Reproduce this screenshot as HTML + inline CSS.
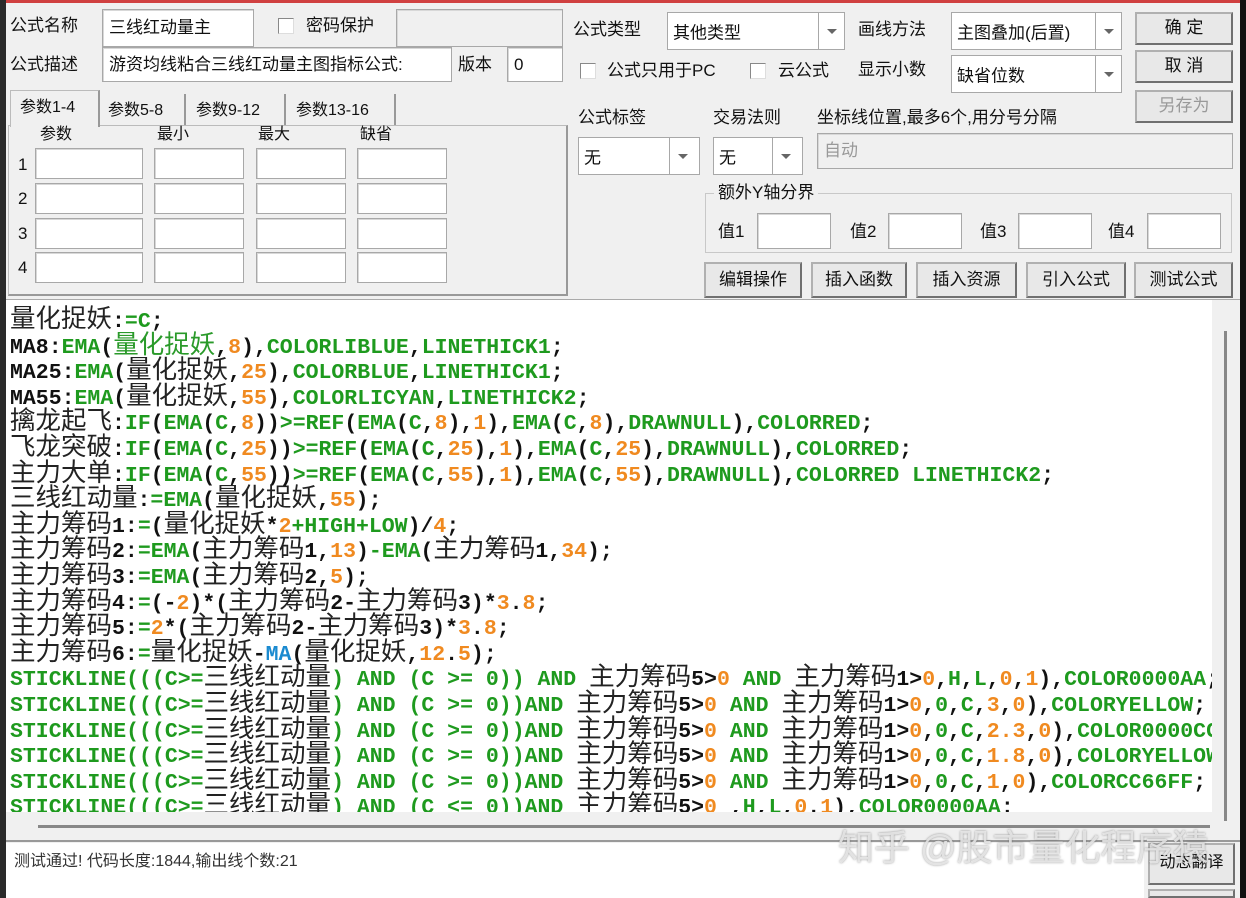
<!DOCTYPE html>
<html><head><meta charset="utf-8"><style>
*{box-sizing:border-box;margin:0;padding:0}
html,body{width:1246px;height:898px;overflow:hidden}
body{background:#f0f0f0;position:relative;font-family:"Liberation Sans","Noto Sans CJK SC",sans-serif;font-size:17px;color:#111}
.a{position:absolute}
.l{position:absolute;white-space:nowrap;line-height:20px}
.in{position:absolute;background:#fff;border:1px solid #a8a8a8;box-shadow:inset 1px 1px 0 #d8d8d8}
.gr{background:#f0f0f0}
.cb{position:absolute;width:16px;height:16px;background:#fff;border:1px solid #888;border-right-color:#ddd;border-bottom-color:#ddd}
.btn{position:absolute;background:#e8e8e8;border:2px solid #707070;border-top-color:#b0b0b0;border-left-color:#b0b0b0;text-align:center;font-size:17px}
.cmb{position:absolute;background:#fff;border:1px solid #a8a8a8}
.cmb .ar{position:absolute;right:0;top:0;bottom:0;width:26px;border-left:1px solid #a8a8a8}
.cmb .ar:after{content:"";position:absolute;left:8px;top:50%;margin-top:-2px;border:5px solid transparent;border-top:5px solid #666}
.cmb span{position:absolute;left:5px;top:50%;transform:translateY(-50%);white-space:nowrap}
#code{position:absolute;left:6px;top:300px;width:1206px;height:512px;background:#fff;overflow:hidden;padding:4px 0 0 4px}
.ln{height:25.6px;line-height:25.6px;white-space:nowrap;font-family:"Liberation Mono",monospace;font-weight:bold;font-size:21.5px;color:#111}
g{color:#1e9a1e}o{color:#f08a20}bl{color:#1a8ad0}
i{font-style:normal;font-weight:normal;font-family:"Noto Sans CJK SC",sans-serif;font-size:25.5px;color:#222;letter-spacing:0}
i.gg{color:#2a9a2a}
</style></head><body>
<div class="a" style="left:0;top:0;width:1246px;height:3px;background:#d04040"></div>
<div class="a" style="left:0;top:0;width:6px;height:898px;background:#2a2a2a"></div>
<div class="a" style="left:1240px;top:0;width:6px;height:898px;background:#111"></div>

<div class="l" style="left:10px;top:16px">公式名称</div>
<div class="in" style="left:102px;top:9px;width:152px;height:38px"><span class="l" style="left:6px;top:8px">三线红动量主</span></div>
<div class="cb" style="left:278px;top:18px"></div>
<div class="l" style="left:306px;top:16px">密码保护</div>
<div class="in gr" style="left:396px;top:9px;width:167px;height:38px"></div>
<div class="l" style="left:10px;top:55px">公式描述</div>
<div class="in" style="left:102px;top:47px;width:350px;height:35px"><span class="l" style="left:6px;top:7px">游资均线粘合三线红动量主图指标公式:</span></div>
<div class="l" style="left:458px;top:55px">版本</div>
<div class="in" style="left:507px;top:47px;width:56px;height:35px"><span class="l" style="left:6px;top:7px">0</span></div>

<div class="a" style="left:8px;top:125px;width:560px;height:171px;border:1px solid #bbb;border-right:2px solid #999;border-bottom:2px solid #999"></div>
<div class="a" style="left:10px;top:90px;width:90px;height:37px;background:#f0f0f0;border:1px solid #bbb;border-bottom:none;border-right:2px solid #999"></div>
<div class="l" style="left:20px;top:98px;font-size:16px">参数1-4</div>
<div class="a" style="left:102px;top:94px;width:84px;height:31px;border-right:2px solid #999"></div>
<div class="l" style="left:108px;top:101px;font-size:16px">参数5-8</div>
<div class="a" style="left:188px;top:94px;width:98px;height:31px;border-right:2px solid #999"></div>
<div class="l" style="left:196px;top:101px;font-size:16px">参数9-12</div>
<div class="a" style="left:288px;top:94px;width:108px;height:31px;border-right:2px solid #999"></div>
<div class="l" style="left:296px;top:101px;font-size:16px">参数13-16</div>
<div class="l" style="left:40px;top:125px;font-size:16px">参数</div>
<div class="l" style="left:157px;top:125px;font-size:16px">最小</div>
<div class="l" style="left:258px;top:125px;font-size:16px">最大</div>
<div class="l" style="left:360px;top:125px;font-size:16px">缺省</div>
<div class="l" style="left:18px;top:155px">1</div><div class="l" style="left:18px;top:189px">2</div><div class="l" style="left:18px;top:224px">3</div><div class="l" style="left:18px;top:258px">4</div>
<div class="in" style="left:35px;top:148px;width:108px;height:31px"></div><div class="in" style="left:154px;top:148px;width:90px;height:31px"></div><div class="in" style="left:256px;top:148px;width:90px;height:31px"></div><div class="in" style="left:357px;top:148px;width:90px;height:31px"></div>
<div class="in" style="left:35px;top:183px;width:108px;height:31px"></div><div class="in" style="left:154px;top:183px;width:90px;height:31px"></div><div class="in" style="left:256px;top:183px;width:90px;height:31px"></div><div class="in" style="left:357px;top:183px;width:90px;height:31px"></div>
<div class="in" style="left:35px;top:218px;width:108px;height:31px"></div><div class="in" style="left:154px;top:218px;width:90px;height:31px"></div><div class="in" style="left:256px;top:218px;width:90px;height:31px"></div><div class="in" style="left:357px;top:218px;width:90px;height:31px"></div>
<div class="in" style="left:35px;top:252px;width:108px;height:31px"></div><div class="in" style="left:154px;top:252px;width:90px;height:31px"></div><div class="in" style="left:256px;top:252px;width:90px;height:31px"></div><div class="in" style="left:357px;top:252px;width:90px;height:31px"></div>

<div class="l" style="left:573px;top:20px">公式类型</div>
<div class="cmb" style="left:667px;top:12px;width:178px;height:38px"><span>其他类型</span><div class="ar"></div></div>
<div class="l" style="left:858px;top:20px">画线方法</div>
<div class="cmb" style="left:951px;top:12px;width:171px;height:38px"><span>主图叠加(后置)</span><div class="ar"></div></div>
<div class="btn" style="left:1135px;top:12px;width:98px;height:33px;line-height:28px">确 定</div>
<div class="cb" style="left:580px;top:63px"></div>
<div class="l" style="left:607px;top:61px">公式只用于PC</div>
<div class="cb" style="left:750px;top:63px"></div>
<div class="l" style="left:778px;top:61px">云公式</div>
<div class="l" style="left:858px;top:60px">显示小数</div>
<div class="cmb" style="left:951px;top:55px;width:171px;height:38px"><span>缺省位数</span><div class="ar"></div></div>
<div class="btn" style="left:1135px;top:50px;width:98px;height:33px;line-height:28px">取 消</div>
<div class="btn" style="left:1135px;top:90px;width:98px;height:33px;line-height:28px;color:#999">另存为</div>
<div class="l" style="left:578px;top:108px">公式标签</div>
<div class="l" style="left:713px;top:108px">交易法则</div>
<div class="l" style="left:817px;top:108px">坐标线位置,最多6个,用分号分隔</div>
<div class="cmb" style="left:578px;top:137px;width:122px;height:38px"><span>无</span><div class="ar" style="width:30px"></div></div>
<div class="cmb" style="left:713px;top:137px;width:90px;height:38px"><span>无</span><div class="ar" style="width:30px"></div></div>
<div class="in gr" style="left:817px;top:133px;width:416px;height:36px"><span class="l" style="left:6px;top:7px;color:#999">自动</span></div>
<div class="a" style="left:705px;top:193px;width:527px;height:60px;border:1px solid #c8c8c8"></div>
<div class="l" style="left:714px;top:183px;background:#f0f0f0;padding:0 4px">额外Y轴分界</div>
<div class="l" style="left:718px;top:222px">值1</div><div class="in" style="left:757px;top:213px;width:74px;height:36px"></div>
<div class="l" style="left:850px;top:222px">值2</div><div class="in" style="left:888px;top:213px;width:74px;height:36px"></div>
<div class="l" style="left:980px;top:222px">值3</div><div class="in" style="left:1018px;top:213px;width:74px;height:36px"></div>
<div class="l" style="left:1108px;top:222px">值4</div><div class="in" style="left:1147px;top:213px;width:74px;height:36px"></div>
<div class="btn" style="left:704px;top:262px;width:98px;height:36px;line-height:31px">编辑操作</div>
<div class="btn" style="left:811px;top:262px;width:96px;height:36px;line-height:31px">插入函数</div>
<div class="btn" style="left:916px;top:262px;width:101px;height:36px;line-height:31px">插入资源</div>
<div class="btn" style="left:1026px;top:262px;width:100px;height:36px;line-height:31px">引入公式</div>
<div class="btn" style="left:1134px;top:262px;width:99px;height:36px;line-height:31px">测试公式</div>

<div class="a" style="left:6px;top:299px;width:1234px;height:1px;background:#aaa"></div>
<div id="code">
<div class="ln"><i>量化捉妖</i>:<g>=C</g>;</div>
<div class="ln">MA8:<g>EMA</g>(<i class="gg">量化捉妖</i>,<o>8</o>),<g>COLORLIBLUE</g>,<g>LINETHICK1</g>;</div>
<div class="ln">MA25:<g>EMA</g>(<i>量化捉妖</i>,<o>25</o>),<g>COLORBLUE</g>,<g>LINETHICK1</g>;</div>
<div class="ln">MA55:<g>EMA</g>(<i>量化捉妖</i>,<o>55</o>),<g>COLORLICYAN</g>,<g>LINETHICK2</g>;</div>
<div class="ln"><i>擒龙起飞</i>:<g>IF</g>(<g>EMA</g>(<g>C</g>,<o>8</o>))<g>&gt;=REF</g>(<g>EMA</g>(<g>C</g>,<o>8</o>),<o>1</o>),<g>EMA</g>(<g>C</g>,<o>8</o>),<g>DRAWNULL</g>),<g>COLORRED</g>;</div>
<div class="ln"><i>飞龙突破</i>:<g>IF</g>(<g>EMA</g>(<g>C</g>,<o>25</o>))<g>&gt;=REF</g>(<g>EMA</g>(<g>C</g>,<o>25</o>),<o>1</o>),<g>EMA</g>(<g>C</g>,<o>25</o>),<g>DRAWNULL</g>),<g>COLORRED</g>;</div>
<div class="ln"><i>主力大单</i>:<g>IF</g>(<g>EMA</g>(<g>C</g>,<o>55</o>))<g>&gt;=REF</g>(<g>EMA</g>(<g>C</g>,<o>55</o>),<o>1</o>),<g>EMA</g>(<g>C</g>,<o>55</o>),<g>DRAWNULL</g>),<g>COLORRED LINETHICK2</g>;</div>
<div class="ln"><i>三线红动量</i>:<g>=EMA</g>(<i>量化捉妖</i>,<o>55</o>);</div>
<div class="ln"><i>主力筹码</i>1:<g>=</g>(<i>量化捉妖</i>*<o>2</o><g>+HIGH+LOW</g>)/<o>4</o>;</div>
<div class="ln"><i>主力筹码</i>2:<g>=EMA</g>(<i>主力筹码</i>1,<o>13</o>)<g>-EMA</g>(<i>主力筹码</i>1,<o>34</o>);</div>
<div class="ln"><i>主力筹码</i>3:<g>=EMA</g>(<i>主力筹码</i>2,<o>5</o>);</div>
<div class="ln"><i>主力筹码</i>4:<g>=</g>(-<o>2</o>)*(<i>主力筹码</i>2-<i>主力筹码</i>3)*<o>3</o>.<o>8</o>;</div>
<div class="ln"><i>主力筹码</i>5:<g>=</g><o>2</o>*(<i>主力筹码</i>2-<i>主力筹码</i>3)*<o>3</o>.<o>8</o>;</div>
<div class="ln"><i>主力筹码</i>6:<g>=</g><i>量化捉妖</i>-<bl>MA</bl>(<i>量化捉妖</i>,<o>12</o>.<o>5</o>);</div>
<div class="ln"><g>STICKLINE(((C&gt;=</g><i>三线红动量</i><g>) AND (C &gt;= 0)) AND </g><i>主力筹码</i>5&gt;<o>0</o><g> AND </g><i>主力筹码</i>1&gt;<o>0</o>,<g>H</g>,<g>L</g>,<o>0</o>,<o>1</o>),<g>COLOR0000AA</g>;</div>
<div class="ln"><g>STICKLINE(((C&gt;=</g><i>三线红动量</i><g>) AND (C &gt;= 0))AND </g><i>主力筹码</i>5&gt;<o>0</o><g> AND </g><i>主力筹码</i>1&gt;<o>0</o>,<g>0</g>,<g>C</g>,<o>3</o>,<o>0</o>),<g>COLORYELLOW</g>;</div>
<div class="ln"><g>STICKLINE(((C&gt;=</g><i>三线红动量</i><g>) AND (C &gt;= 0))AND </g><i>主力筹码</i>5&gt;<o>0</o><g> AND </g><i>主力筹码</i>1&gt;<o>0</o>,<g>0</g>,<g>C</g>,<o>2.3</o>,<o>0</o>),<g>COLOR0000CC</g>;</div>
<div class="ln"><g>STICKLINE(((C&gt;=</g><i>三线红动量</i><g>) AND (C &gt;= 0))AND </g><i>主力筹码</i>5&gt;<o>0</o><g> AND </g><i>主力筹码</i>1&gt;<o>0</o>,<g>0</g>,<g>C</g>,<o>1.8</o>,<o>0</o>),<g>COLORYELLOW</g>;</div>
<div class="ln"><g>STICKLINE(((C&gt;=</g><i>三线红动量</i><g>) AND (C &gt;= 0))AND </g><i>主力筹码</i>5&gt;<o>0</o><g> AND </g><i>主力筹码</i>1&gt;<o>0</o>,<g>0</g>,<g>C</g>,<o>1</o>,<o>0</o>),<g>COLORCC66FF</g>;</div>
<div class="ln"><g>STICKLINE(((C&gt;=</g><i>三线红动量</i><g>) AND (C &lt;= 0))AND </g><i>主力筹码</i>5&gt;<o>0</o> ,<g>H</g>,<g>L</g>,<o>0</o>.<o>1</o>),<g>COLOR0000AA</g>:</div>
</div>
<div class="a" style="left:1212px;top:300px;width:28px;height:512px;background:#f0f0f0"></div>
<div class="a" style="left:1224px;top:331px;width:3px;height:490px;background:#888"></div>
<div class="a" style="left:38px;top:825px;width:1172px;height:3px;background:#888"></div>
<div class="a" style="left:6px;top:840px;width:1234px;height:2px;background:#999"></div>
<div class="a" style="left:6px;top:843px;width:1138px;height:55px;background:#fff"></div>
<div class="l" style="left:14px;top:852px;font-size:16px;color:#333">测试通过! 代码长度:1844,输出线个数:21</div>
<div class="btn" style="left:1148px;top:843px;width:87px;height:42px;line-height:36px;font-size:16px">动态翻译</div>
<div class="btn" style="left:1148px;top:889px;width:87px;height:9px"></div>
<div class="l" style="left:838px;top:828px;font-size:36px;line-height:40px;color:rgba(235,235,235,0.85);text-shadow:0 0 2px rgba(80,80,80,0.6)">知乎 @股市量化程序猿</div>
</body></html>
